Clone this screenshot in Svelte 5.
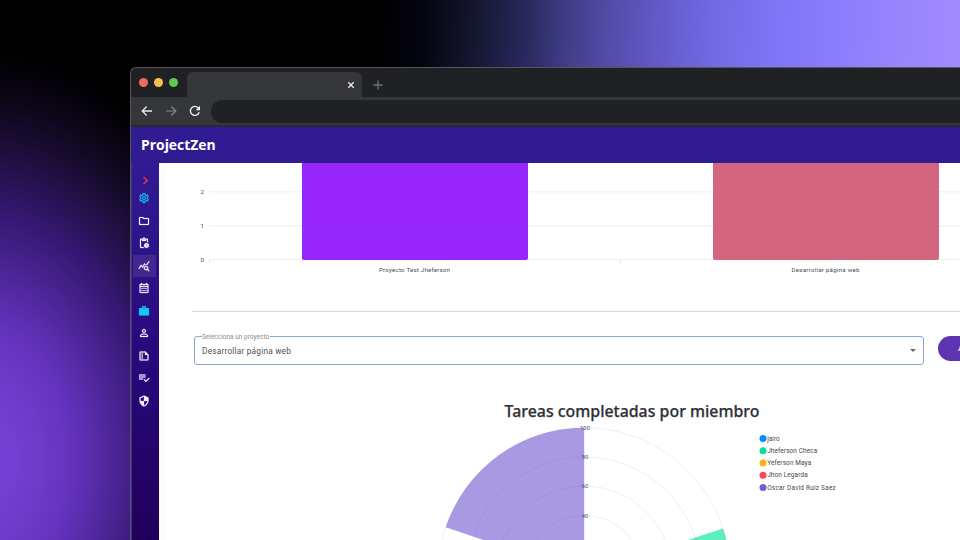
<script>
  const cx = 425.2, cy = 410.7, R = 146;
  function point(deg, r = R) {
    const a = (deg * Math.PI) / 180;
    return `${(cx + r * Math.sin(a)).toFixed(2)} ${(cy - r * Math.cos(a)).toFixed(2)}`;
  }
  function slice(from, to) {
    return `M${cx} ${cy}L${point(from)}A${R} ${R} 0 0 1 ${point(to)}Z`;
  }
  const rings = [100, 80, 60, 40];
  const members = [
    { name: 'jairo', color: '#008ffb', width: 12.5 },
    { name: 'Jheferson Checa', color: '#00e396', width: 50 },
    { name: 'Yeferson Maya', color: '#feb019', width: 44 },
    { name: 'Jhon Legarda', color: '#ff4560', width: 40.5 },
    { name: 'Oscar David Ruiz Saez', color: '#775dd0', width: 68.5 }
  ];
  const nav = [
    { id: 'gear', color: '#18b6f4', d: 'M19.43 12.98c.04-.32.07-.64.07-.98 0-.34-.03-.66-.07-.98l2.11-1.65c.19-.15.24-.42.12-.64l-2-3.46c-.12-.22-.39-.3-.61-.22l-2.49 1c-.52-.4-1.08-.73-1.69-.98l-.38-2.65C14.46 2.18 14.25 2 14 2h-4c-.25 0-.46.18-.49.42l-.38 2.65c-.61.25-1.17.59-1.69.98l-2.49-1c-.23-.09-.49 0-.61.22l-2 3.46c-.13.22-.07.49.12.64l2.11 1.65c-.04.32-.07.65-.07.98 0 .33.03.66.07.98l-2.11 1.65c-.19.15-.24.42-.12.64l2 3.46c.12.22.39.3.61.22l2.49-1c.52.4 1.08.73 1.69.98l.38 2.65c.03.24.24.42.49.42h4c.25 0 .46-.18.49-.42l.38-2.65c.61-.25 1.17-.59 1.69-.98l2.49 1c.23.09.49 0 .61-.22l2-3.46c.12-.22.07-.49-.12-.64l-2.11-1.65zm-1.98-1.71c.04.31.05.52.05.73 0 .21-.02.43-.05.73l-.14 1.13.89.7 1.08.84-.7 1.21-1.27-.51-1.04-.42-.9.68c-.43.32-.84.56-1.25.73l-1.06.43-.16 1.13-.2 1.35h-1.4l-.19-1.35-.16-1.13-1.06-.43c-.43-.18-.83-.41-1.23-.71l-.91-.7-1.06.43-1.27.51-.7-1.21 1.08-.84.89-.7-.14-1.13c-.03-.31-.05-.54-.05-.74s.02-.43.05-.73l.14-1.13-.89-.7-1.08-.84.7-1.21 1.27.51 1.04.42.9-.68c.43-.32.84-.56 1.25-.73l1.06-.43.16-1.13.2-1.35h1.39l.19 1.35.16 1.13 1.06.43c.43.18.83.41 1.23.71l.91.7 1.06-.43 1.27-.51.7 1.21-1.07.85-.89.7.14 1.13zM12 8c-2.21 0-4 1.79-4 4s1.79 4 4 4 4-1.79 4-4-1.79-4-4-4zm0 6c-1.1 0-2-.9-2-2s.9-2 2-2 2 .9 2 2-.9 2-2 2z' },
    { id: 'folder', d: 'M9.17 6l2 2H20v10H4V6h5.17M10 4H4c-1.1 0-1.99.9-1.99 2L2 18c0 1.1.9 2 2 2h16c1.1 0 2-.9 2-2V8c0-1.1-.9-2-2-2h-8l-2-2z' },
    { id: 'pending', d: 'M17 12c-2.76 0-5 2.24-5 5s2.24 5 5 5 5-2.24 5-5-2.24-5-5-5zm1.65 7.35L16.5 17.2V14h1v2.79l1.85 1.85-.7.71zM18 3h-3.18C14.4 1.84 13.3 1 12 1s-2.4.84-2.82 2H6c-1.1 0-2 .9-2 2v15c0 1.1.9 2 2 2h6.11c-.59-.57-1.07-1.25-1.42-2H6V5h2v3h8V5h2v5.08c.71.1 1.38.31 2 .6V5c0-1.1-.9-2-2-2zm-6 2c-.55 0-1-.45-1-1s.45-1 1-1 1 .45 1 1-.45 1-1 1z' },
    { id: 'insights', active: true, d: 'M19.88 18.47c.44-.7.7-1.51.7-2.39 0-2.49-2.01-4.5-4.5-4.5s-4.5 2.01-4.5 4.5 2.01 4.5 4.49 4.5c.88 0 1.7-.26 2.39-.7L21.58 23 23 21.58l-3.12-3.11zm-3.8.11c-1.38 0-2.5-1.12-2.5-2.5s1.12-2.5 2.5-2.5 2.5 1.12 2.5 2.5-1.12 2.5-2.5 2.5zM15.72 10.08c-.74.02-1.45.18-2.1.45l-.55-.83-3.8 6.18-3.01-3.52-3.63 5.81L1 17l5-8 3 3.5L13 6l2.72 4.08zm2.59.5c-.64-.28-1.33-.45-2.05-.49L21.38 2 23 3.18l-4.69 7.4z' },
    { id: 'calendar', d: 'M19 4h-1V2h-2v2H8V2H6v2H5c-1.11 0-1.99.9-1.99 2L3 20c0 1.1.89 2 2 2h14c1.1 0 2-.9 2-2V6c0-1.1-.9-2-2-2zm0 16H5V10h14v10zm0-12H5V6h14v2zM9 14H7v-2h2v2zm4 0h-2v-2h2v2zm4 0h-2v-2h2v2zm-8 4H7v-2h2v2zm4 0h-2v-2h2v2zm4 0h-2v-2h2v2z' },
    { id: 'case', color: '#18c4f2', d: 'M20 6h-4V4c0-1.11-.89-2-2-2h-4c-1.11 0-2 .89-2 2v2H4c-1.11 0-1.99.89-1.99 2L2 19c0 1.11.89 2 2 2h16c1.11 0 2-.89 2-2V8c0-1.11-.89-2-2-2zm-6 0h-4V4h4v2z' },
    { id: 'person', d: 'M12 5.9a2.1 2.1 0 1 1 0 4.2 2.1 2.1 0 0 1 0-4.2m0 9.1c2.97 0 6.1 1.46 6.1 2.1v1.1H5.9v-1.1c0-.64 3.13-2.1 6.1-2.1M12 4C9.79 4 8 5.79 8 8s1.79 4 4 4 4-1.79 4-4-1.79-4-4-4zm0 9c-2.67 0-8 1.34-8 4v3h16v-3c0-2.66-5.33-4-8-4z' },
    { id: 'document', d: 'M15 3H5c-1.1 0-2 .9-2 2v14c0 1.1.9 2 2 2h14c1.1 0 2-.9 2-2V9l-6-6zM5 19V5h9v5h5v9H5zM7 7h3v2H7V7zm0 4h3v2H7v-2zm0 4h3v2H7v-2z' },
    { id: 'checklist', d: 'M2 5h13v2H2V5zm0 4h13v2H2V9zm0 4h8v2H2v-2zm19.500-1.500L23 13l-7 7-4.500-4.500L13 14l3 3z' },
    { id: 'shield', d: 'M12 1L3 5v6c0 5.55 3.84 10.74 9 12 5.16-1.26 9-6.45 9-12V5l-9-4zm0 10.99h7c-.53 4.12-3.28 7.79-7 8.94V12H5V6.3l7-3.11v8.8z' }
  ];
</script>

<div class="desktop">
  <div class="window">
    <div class="tabs">
      <div class="lights"><i class="red"></i><i class="yellow"></i><i class="green"></i></div>
      <div class="tab">
        <svg width="8" height="8" viewBox="0 0 8 8"><path d="M1.300 1.300l5.400 5.400M6.700 1.300L1.300 6.700" stroke="#eee" stroke-width="1.300" /></svg>
      </div>
      <svg class="plus" width="10" height="10" viewBox="0 0 10 10"><path d="M5 .5v9M.5 5h9" stroke="#717377" stroke-width="1.300" /></svg>
    </div>
    <div class="toolbar">
      <svg width="12" height="12" viewBox="0 0 12 12"><path d="M11 6H1.500M5.700 1.500L1.200 6l4.500 4.500" fill="none" stroke="#e8e9ea" stroke-width="1.300" /></svg>
      <svg width="12" height="12" viewBox="0 0 12 12"><path d="M1 6h9.500M6.300 1.500L10.800 6l-4.500 4.500" fill="none" stroke="#85878b" stroke-width="1.200" /></svg>
      <svg width="12" height="12" viewBox="0 0 12 12"><path d="M10.200 7.300A4.500 4.500 0 1 1 9.300 2.900" fill="none" stroke="#eeefef" stroke-width="1.400" /><path d="M11 .8v4.500H6.500z" fill="#eeefef" /></svg>
      <div class="address"></div>
    </div>
    <header>ProjectZen</header>
    <div class="body">
      <nav>
        <div class="chevron"><svg width="7" height="9" viewBox="0 0 7 9"><path d="M1.500 1l3.700 3.500L1.500 8" fill="none" stroke="#dc2f58" stroke-width="1.600" /></svg></div>
        {#each nav as item (item.id)}
          <div class="item" class:active={item.active}>
            <svg width="12" height="12" viewBox="0 0 24 24"><path d={item.d} fill={item.color ?? '#f3effc'} stroke={item.color ?? '#f3effc'} stroke-width=".5" /></svg>
          </div>
        {/each}
      </nav>
      <main>
        <svg class="bars" width="801" height="121" viewBox="0 0 801 121">
          <path d="M50 28.800H801M50 62.800H801M50 96.600H801" stroke="#efefef" />
          <path d="M50.500 97v3.500M461.500 97v3.500" stroke="#e4e4e4" />
          <path d="M143 0h226v95q0 2-2 2H145q-2 0-2-2z" fill="#9626fc" />
          <path d="M554 0h226v95q0 2-2 2H556q-2 0-2-2z" fill="#d3657e" />
          <path d="M143 62.800h226" stroke="#9024f4" /><path d="M554 62.800h226" stroke="#d0637c" />
          <g class="axis">
            <text x="45" y="31.200" text-anchor="end">2</text>
            <text x="45" y="65.200" text-anchor="end">1</text>
            <text x="45" y="99.200" text-anchor="end">0</text>
            <text x="220" y="109.200" textLength="71">Proyecto Test Jheferson</text>
            <text x="632.500" y="109.200" textLength="68">Desarrollar página web</text>
          </g>
        </svg>
        <div class="rule"></div>
        <div class="controls">
          <fieldset>
            <legend>Selecciona un proyecto</legend>
            <span>Desarrollar página web</span>
            <svg width="6" height="3" viewBox="0 0 6 3"><path d="M0 0h6L3 3z" fill="#696969" /></svg>
          </fieldset>
          <button>A</button>
        </div>
        <svg class="polar" width="801" height="150" viewBox="0 227 801 150">
          <path d={slice(288.5, 360)} fill="#a999e2" />
          <path d={slice(72, 144)} fill="#5deebd" />
          {#each rings as value (value)}
            <circle {cx} {cy} r={(R * value) / 100} fill="none" stroke="#4b4670" stroke-opacity=".09" />
          {/each}
          <text class="title" x="345.500" y="253.600" textLength="255" lengthAdjust="spacingAndGlyphs">Tareas completadas por miembro</text>
          {#each rings as value (value)}
            <text class="ring" x="426" y={cy - (R * value) / 100 + 2.2} text-anchor="middle">{value}</text>
          {/each}
          {#each members as member, i (member.name)}
            <circle cx="604" cy={275.4 + i * 12.25} r="3.500" fill={member.color} />
            <text class="legend" x="608.200" y={277.7 + i * 12.25} textLength={member.width}>{member.name}</text>
          {/each}
        </svg>
      </main>
    </div>
  </div>
</div>

<style>
  :global(body) { margin: 0; overflow: hidden; }
  * { box-sizing: border-box; }
  .desktop {
    width: 960px; height: 540px; overflow: hidden; padding: 67px 0 0 130px;
    font-family: Roboto, "Liberation Sans", sans-serif;
    background:
      radial-gradient(ellipse 285px 410px at -20px 460px, #7840da 0%, #743fd2 12%, #6433be 32%, #4c2596 47%, #361873 60%, #1e0f3f 75%, #0d0619 88%, #0000 100%),
      linear-gradient(93deg, #000 0%, #000 38%, #04050f 43%, #14162f 48%, #262759 53%, #3d3b82 57%, #524ba6 61.500%, #6259c6 66.500%, #7168e2 72%, #7d74f5 78%, #897cfd 84%, #9884fd 91%, #a58eff 100%);
  }
  .window { width: 860px; height: 500px; border: solid #555659; border-width: 1px 0 0 1px; border-radius: 6px 0 0; overflow: hidden; background: #202124; }
  .tabs { height: 29px; display: flex; align-items: flex-end; border-left: 1px solid #202124; }
  .lights { display: flex; gap: 6px; padding: 0 9px 10px 7px; }
  .lights i { width: 9px; height: 9px; border-radius: 50%; }
  .red { background: #ed6a5e; }
  .yellow { background: #f5bf4f; }
  .green { background: #61c554; }
  .tab { width: 175px; height: 25px; background: #35363a; border-radius: 6px 6px 0 0; display: flex; align-items: center; justify-content: flex-end; padding: 1px 7px 0 0; }
  .plus { margin: 0 0 7px 11px; }
  .toolbar { height: 30px; background: #35363a; border-bottom: 2px solid #28292e; display: flex; align-items: center; gap: 12px; padding-left: 9.500px; }
  .address { flex: 1; height: 23px; background: #202124; border-radius: 12px 0 0 12px; margin-left: -2px; }
  header { height: 36px; background: #311b92; color: #fff; font: 700 13.900px/35.500px "Open Sans", "Noto Sans", sans-serif; padding-left: 10px; }
  .body { display: flex; height: 380px; }
  nav { flex: none; width: 28px; background: linear-gradient(#311b92, #28087b 52%, #21005a); border-left: 1px solid #43308c; padding: 12px 0 0 1px; }
  .chevron { height: 12px; width: 24px; padding-bottom: 2px; display: flex; justify-content: center; align-items: center; }
  .item { height: 22.500px; width: 23px; display: flex; align-items: center; justify-content: center; padding-right: 1px; }
  .active { background: #41288f; }
  main { flex: none; width: 801px; background: #fff; display: flex; flex-direction: column; align-items: flex-start; box-shadow: inset 7px 0 #fcfcfc; }
  .bars { flex: none; }
  .axis text { font-size: 6.200px; fill: #4b5058; }
  .rule { width: 768px; height: 1px; margin: 27px 0 0 33px; background: #d4d6d8; flex: none; }
  .controls { display: flex; align-items: flex-end; gap: 14px; width: 840px; height: 53px; margin-left: 35px; flex: none; }
  fieldset { width: 730px; height: 33px; margin: 0; min-width: 0; border: 1px solid #7da9dc; border-radius: 3px; padding: 0 7px 4px; display: flex; align-items: center; justify-content: space-between; }
  legend { font-size: 6.400px; line-height: 8px; letter-spacing: .06px; padding: 1px 1px 0 0; color: #8b8b8b; }
  fieldset span { font-size: 8.300px; letter-spacing: .2px; color: #505050; }
  button { width: 90px; height: 25px; margin-bottom: 4px; border: 0; border-radius: 13px; background: #5e35b1; color: #fff; font: 500 8px Roboto, sans-serif; text-align: left; padding: 0 0 0 20px; }
  .polar { flex: none; margin-top: 25px; overflow: visible; }
  .title { font: 500 16px "Noto Sans", "Open Sans", sans-serif; fill: #303136; stroke: #303136; stroke-width: .25; }
  .ring { font-size: 5.800px; fill: #555065; }
  .legend { font-size: 6.400px; fill: #42484d; }
</style>
